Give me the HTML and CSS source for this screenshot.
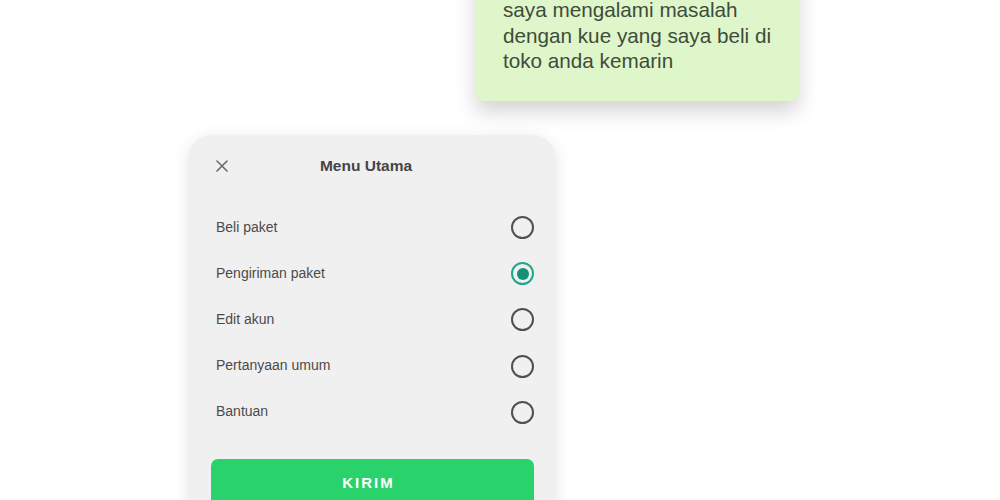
FILE: index.html
```html
<!DOCTYPE html>
<html lang="id">
<head>
<meta charset="utf-8">
<title>Menu Utama</title>
<link rel="stylesheet" href="styles.css">
</head>
<body>
<div class="page">
  <div class="bubble">
    <p>saya mengalami masalah dengan kue yang saya beli di toko anda kemarin</p>
  </div>
  <div class="card">
    <div class="card-header">
      <span class="close" aria-label="Tutup">
        <svg width="12" height="12" viewBox="0 0 12 12"><path d="M1 1 L11 11 M11 1 L1 11" stroke="#6b6b6b" stroke-width="1.6" fill="none" stroke-linecap="round"/></svg>
      </span>
      <h2 class="title">Menu Utama</h2>
    </div>
    <ul class="options">
      <li class="option"><span class="label">Beli paket</span><span class="radio"></span></li>
      <li class="option"><span class="label">Pengiriman paket</span><span class="radio selected"></span></li>
      <li class="option"><span class="label">Edit akun</span><span class="radio"></span></li>
      <li class="option"><span class="label">Pertanyaan umum</span><span class="radio"></span></li>
      <li class="option"><span class="label">Bantuan</span><span class="radio"></span></li>
    </ul>
    <button class="send">KIRIM</button>
  </div>
</div>
</body>
</html>
```
FILE: styles.css
```css
* { box-sizing: border-box; }
html, body { margin: 0; padding: 0; background: #ffffff; }
body {
  font-family: "Liberation Sans", Arial, sans-serif;
  width: 1000px;
  height: 500px;
  overflow: hidden;
}
.page {
  display: flex;
  flex-direction: column;
  align-items: flex-start;
}
.bubble {
  margin-top: -31px;
  margin-left: 475px;
  width: 324px;
  padding: 28px 20px 27px 28px;
  background: #dff6cb;
  border-radius: 9px;
  box-shadow: 0 11px 20px rgba(0, 0, 0, 0.17);
}
.bubble p {
  margin: 0;
  font-size: 20.7px;
  line-height: 25.5px;
  color: #3e4c3a;
}
.card {
  margin-top: 34px;
  margin-left: 188px;
  width: 368px;
  height: 420px;
  background: #f0f0f0;
  border-radius: 24px;
  padding: 20px 22px 0 23px;
  box-shadow: 0 3px 16px rgba(0, 0, 0, 0.10);
}
.card-header {
  display: flex;
  align-items: center;
  height: 22px;
}
.close {
  display: flex;
  margin-left: 5px;
  margin-top: 1px;
  width: 12px;
  height: 12px;
}
.title {
  flex: 1;
  margin: 0 30px 0 0;
  text-align: center;
  font-size: 15.5px;
  font-weight: bold;
  color: #454545;
  line-height: 22px;
}
.options {
  list-style: none;
  margin: 28px 0 0 0;
  padding: 0;
}
.option {
  display: flex;
  align-items: center;
  justify-content: space-between;
  height: 46.2px;
  padding-left: 5px;
}
.label {
  font-size: 14px;
  color: #4b4b4b;
  margin-top: -2px;
}
.radio {
  width: 23px;
  height: 23px;
  border: 2px solid #505050;
  border-radius: 50%;
  display: flex;
  align-items: center;
  justify-content: center;
}
.radio.selected {
  border-color: #23a58b;
}
.radio.selected::after {
  content: "";
  width: 12px;
  height: 12px;
  border-radius: 50%;
  background: #158f78;
}
.send {
  display: flex;
  align-items: flex-start;
  justify-content: center;
  margin-top: 24px;
  width: 323px;
  height: 48px;
  border: none;
  border-radius: 7px;
  background: #2ad26b;
  color: #ffffff;
  font-family: "Liberation Sans", Arial, sans-serif;
  font-size: 15px;
  font-weight: bold;
  letter-spacing: 2px;
  padding: 0 8px 0 0;
  line-height: 48px;
}
```
